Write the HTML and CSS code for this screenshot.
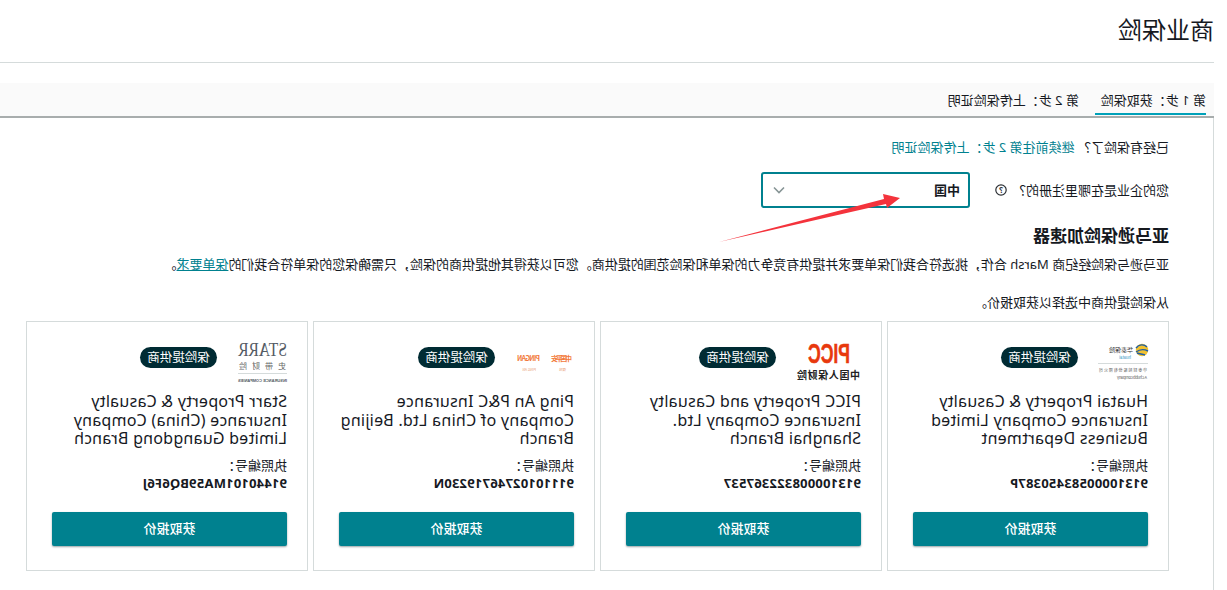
FILE: index.html
```html
<!DOCTYPE html>
<html lang="zh">
<head>
<meta charset="utf-8">
<title>商业保险</title>
<link rel="stylesheet" href="styles.css">
</head>
<body>
<div class="page">
  <header class="head"><h1>商业保险</h1></header>
  <nav class="tabs">
    <a class="tab active">第 1 步：获取保险</a>
    <a class="tab">第 2 步：上传保险证明</a>
  </nav>
  <main class="panel">
    <p class="line first">已经有保险了？ <a class="link">继续前往第 2 步：上传保险证明</a></p>
    <div class="where">
      <label class="where-label">您的企业是在哪里注册的？</label>
      <svg class="help" viewBox="0 0 12 12"><circle cx="6" cy="6" r="5.2"/><text x="6" y="8.8" text-anchor="middle">?</text></svg>
      <div class="select"><span class="select-value">中国</span>
        <svg class="chev" viewBox="0 0 12 8"><path d="M1 1.5 6 6.5 11 1.5"/></svg>
      </div>
    </div>
    <h2>亚马逊保险加速器</h2>
    <p class="line intro">亚马逊与保险经纪商 Marsh 合作，挑选符合我们保单要求并提供有竞争力的保单和保险范围的提供商。您可以获得其他提供商的保险，只需确保您的保单符合我们的<a class="link under">保单要求</a>。</p>
    <p class="line pick">从保险提供商中选择以获取报价。</p>
    <section class="cards">
      <article class="card">
        <div class="top">
          <svg class="logo w50" viewBox="0 0 50 50">
            <circle class="hy" cx="6" cy="15" r="6.2"/>
            <path class="hb" d="M1 12c3-3 8-3 11 1M0 16c4-2 8-2 12 1M3 20c3-1 6-1 8-2" />
            <text class="ht" x="15" y="17" textLength="24">华泰保险</text>
            <text class="tiny blue" x="17" y="24">huatai</text>
            <rect class="hl" x="0" y="28" width="50" height="1"/>
            <text class="tiny grey" x="1" y="37" textLength="48">华泰财险股份有限公司</text>
            <text class="tiny grey" x="1" y="44" textLength="30">A Chubb company</text>
          </svg>
          <span class="pill">保险提供商</span>
        </div>
        <h3>Huatai Property &amp; Casualty Insurance Company Limited Business Department</h3>
        <p class="lic">执照编号：</p>
        <p class="num">91310000583450387P</p>
        <button class="quote">获取报价</button>
      </article>
      <article class="card">
        <div class="top">
          <svg class="logo w65" viewBox="0 0 65 50">
            <text class="picc" x="11" y="28" textLength="42" lengthAdjust="spacingAndGlyphs">PICC</text>
            <text class="piccn" x="1" y="44" textLength="63">中国人保财险</text>
          </svg>
          <span class="pill">保险提供商</span>
        </div>
        <h3>PICC Property and Casualty Insurance Company Ltd. Shanghai Branch</h3>
        <p class="lic">执照编号：</p>
        <p class="num">913100008322367537</p>
        <button class="quote">获取报价</button>
      </article>
      <article class="card">
        <div class="top">
          <svg class="logo w59" viewBox="0 0 59 50">
            <text class="pa" x="2" y="26" textLength="21">中国平安</text>
            <text class="pa" x="34" y="26" textLength="23">PINGAN</text>
            <text class="pas" x="8" y="36">保险</text>
            <text class="pas" x="38" y="36">PING AN</text>
          </svg>
          <span class="pill">保险提供商</span>
        </div>
        <h3>Ping An P&amp;C Insurance Company of China Ltd. Beijing Branch</h3>
        <p class="lic">执照编号：</p>
        <p class="num">91110102746719230N</p>
        <button class="quote">获取报价</button>
      </article>
      <article class="card">
        <div class="top">
          <svg class="logo w50" viewBox="0 0 50 50">
            <text class="st" x="0" y="21" textLength="49" lengthAdjust="spacingAndGlyphs">STARR</text>
            <text class="stc" x="1" y="34" textLength="47">史带财险</text>
            <rect class="hl" x="0" y="38" width="49" height="1"/>
            <text class="stt" x="0" y="47" textLength="49" lengthAdjust="spacingAndGlyphs">INSURANCE COMPANIES</text>
          </svg>
          <span class="pill">保险提供商</span>
        </div>
        <h3>Starr Property &amp; Casualty Insurance (China) Company Limited Guangdong Branch</h3>
        <p class="lic">执照编号：</p>
        <p class="num">91440101MA59BQ6F6J</p>
        <button class="quote">获取报价</button>
      </article>
    </section>
  </main>
</div>
<svg class="arrow" viewBox="0 0 200 60"><polygon points="0,52 165,9 164,4 181,8 168,18 167,14"/></svg>
</body>
</html>
```

FILE: styles.css
```css
* { box-sizing: border-box; }
html, body { margin: 0; padding: 0; }
body {
  position: relative;
  width: 1227px;
  height: 590px;
  overflow: hidden;
  background: #fff;
  color: #16191f;
  font-family: "Noto Sans", "Noto Sans CJK SC", sans-serif;
  font-size: 13px;
}
.page {
  width: 1227px;
  height: 590px;
  padding-left: 13px;
  transform: scaleX(-1);
  overflow: hidden;
}
.head {
  height: 63px;
  border-bottom: 1px solid #d5dbdb;
  margin-bottom: 20px;
}
h1 {
  margin: 0;
  padding-top: 13px;
  font-size: 24px;
  line-height: 34px;
  font-weight: 400;
  color: #16191f;
}
.tabs {
  display: flex;
  gap: 16px;
  height: 35px;
  padding-left: 8px;
  background: #fafafa;
  border-bottom: 2px solid #a8adad;
}
.tab {
  display: block;
  height: 33px;
  padding: 7px 6px 0 0;
  line-height: 20px;
  font-size: 13px;
  white-space: nowrap;
  color: #16191f;
}
.tab.active {
  width: 111px;
  border-bottom: 2px solid #00a1b9;
  height: 32px;
}
.panel {
  height: 472px;
  padding: 19px 28px 0 44px;
  border-left: 1px solid #d5dbdb;
}
.line { margin: 0; line-height: 20px; font-size: 13px; }
.link { color: #00818f; }
.under { text-decoration: underline; }
.where {
  display: flex;
  align-items: center;
  height: 36px;
  margin-top: 15px;
}
.where-label { width: 162px; line-height: 20px; }
.help { width: 12px; height: 12px; flex: none; }
.help circle { fill: none; stroke: #2a2e33; stroke-width: 1.2; }
.help text { font: 700 8px "Noto Sans", sans-serif; fill: #2a2e33; }
.select {
  display: flex;
  align-items: center;
  justify-content: space-between;
  width: 209px;
  height: 36px;
  margin-left: 25px;
  padding: 0 8px;
  border: 2px solid #00818f;
  border-radius: 3px;
  font-weight: 700;
}
.select-value { padding-bottom: 2px; }
.chev { width: 12px; height: 8px; margin-right: 2px; }
.chev path { fill: none; stroke: #879596; stroke-width: 1.6; }
h2 {
  margin: 17px 0 0;
  font-size: 17px;
  line-height: 22px;
  font-weight: 700;
}
.intro { margin-top: 7px; white-space: nowrap; letter-spacing: -0.025px; }
.pick { margin-top: 18px; }
.cards {
  display: grid;
  grid-template-columns: repeat(4, 1fr);
  gap: 5px;
  margin-top: 9px;
}
.card {
  height: 250px;
  padding: 13px 25px 0 20px;
  border: 1px solid #d5dbdb;
}
.top {
  display: flex;
  align-items: flex-start;
  gap: 20px;
  height: 50px;
}
.logo { height: 50px; flex: none; display: block; overflow: visible; }
.w50 { width: 50px; }
.w59 { width: 59px; }
.w65 { width: 65px; }
.pill {
  flex: none;
  width: 77px;
  height: 21px;
  margin-top: 12px;
  border-radius: 11px;
  background: #002b33;
  color: #fff;
  font-size: 12.5px;
  line-height: 21px;
  text-align: center;
}
h3 {
  height: 56px;
  margin: 7px 0 0;
  font-size: 16px;
  line-height: 18.5px;
  font-weight: 400;
  letter-spacing: 0.25px;
}
.lic { margin: 8px 0 0; line-height: 18px; }
.num { margin: 0; line-height: 18px; font-weight: 700; white-space: nowrap; letter-spacing: 0.2px; }
.quote {
  display: block;
  width: 235px;
  height: 34px;
  margin-top: 20px;
  padding: 0 0 4px;
  border: 0;
  border-radius: 2px;
  background: #00818f;
  color: #fff;
  font: 500 13px "Noto Sans CJK SC", sans-serif;
  box-shadow: 0 1px 2px rgba(0, 28, 36, 0.4);
}
.hy { fill: #f2c230; }
.hb { fill: none; stroke: #1d5ea8; stroke-width: 1.4; }
.hl { fill: #d5dbdb; }
.ht { font-size: 6px; fill: #333; font-family: "Noto Sans CJK SC", sans-serif; }
.tiny { font-size: 4px; font-family: "Noto Sans CJK SC", sans-serif; }
.blue { fill: #1d8fc0; }
.grey { fill: #555; }
.picc { font: 700 27px "Liberation Sans", sans-serif; fill: #e8380d; stroke: #e8380d; stroke-width: 0.5; }
.piccn { font: 700 10px "Noto Sans CJK SC", sans-serif; fill: #222; }
.pa { font: 700 7px "Noto Sans CJK SC", sans-serif; fill: #f27a3c; }
.pas { font: 400 3.5px "Noto Sans CJK SC", sans-serif; fill: #e89a70; }
.st { font: 400 18px "Liberation Serif", serif; fill: #545b64; }
.stc { font: 400 8px "Noto Sans CJK SC", sans-serif; fill: #666; }
.stt { font: 700 4px "Liberation Sans", sans-serif; fill: #545b64; }
.arrow {
  position: absolute;
  left: 719px;
  top: 190px;
  width: 200px;
  height: 60px;
  fill: #f4333c;
}
```
